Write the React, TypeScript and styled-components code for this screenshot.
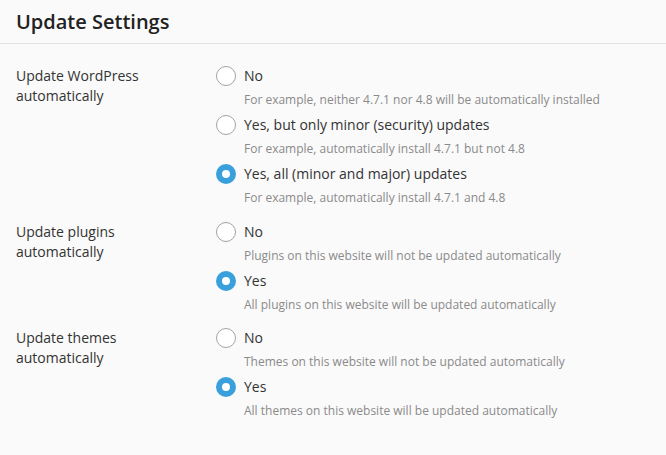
import React from "react";
import styled, { createGlobalStyle } from "styled-components";

const Global = createGlobalStyle`
  html, body {
    margin: 0;
    padding: 0;
    background: #fafafa;
  }
  body {
    font-family: "Open Sans", "Noto Sans", sans-serif;
    color: #333;
  }
`;

const Page = styled.div`
  width: 666px;
  min-height: 455px;
  background: #fafafa;
`;

const Header = styled.header`
  height: 44px;
  box-sizing: border-box;
  padding: 0 16px;
  display: flex;
  align-items: center;
  border-bottom: 1px solid #e4e4e4;
`;

const Title = styled.h1`
  margin: 0;
  font-size: 20px;
  font-weight: 600;
  color: #222;
  line-height: 28px;
  letter-spacing: 0;
`;

const Body = styled.div`
  padding: 22px 16px 0 16px;
  display: flex;
  flex-direction: column;
  gap: 14.5px;
`;

const Row = styled.div`
  display: grid;
  grid-template-columns: 200px 1fr;
`;

const RowLabel = styled.div`
  font-size: 14px;
  line-height: 20px;
  color: #333;
`;

const Options = styled.div`
  display: flex;
  flex-direction: column;
  gap: 6px;
`;

const Option = styled.label`
  display: flex;
  align-items: flex-start;
  gap: 8px;
`;

const Radio = styled.span<{ $checked: boolean }>`
  flex: none;
  width: 20px;
  height: 20px;
  box-sizing: border-box;
  border-radius: 50%;
  background: #fff;
  border: ${(p) => (p.$checked ? "6.5px solid #3aa0dc" : "1px solid #a3a3a3")};
`;

const OptionText = styled.div`
  display: flex;
  flex-direction: column;
  gap: 5px;
`;

const OptionLabel = styled.span`
  font-size: 14px;
  line-height: 20px;
  color: #333;
`;

const OptionDesc = styled.span`
  font-size: 12px;
  line-height: 18px;
  color: #8a8a8a;
`;

type Opt = { label: string; desc: string; checked?: boolean };
type Group = { title: string[]; options: Opt[] };

const groups: Group[] = [
  {
    title: ["Update WordPress", "automatically"],
    options: [
      { label: "No", desc: "For example, neither 4.7.1 nor 4.8 will be automatically installed" },
      { label: "Yes, but only minor (security) updates", desc: "For example, automatically install 4.7.1 but not 4.8" },
      { label: "Yes, all (minor and major) updates", desc: "For example, automatically install 4.7.1 and 4.8", checked: true },
    ],
  },
  {
    title: ["Update plugins", "automatically"],
    options: [
      { label: "No", desc: "Plugins on this website will not be updated automatically" },
      { label: "Yes", desc: "All plugins on this website will be updated automatically", checked: true },
    ],
  },
  {
    title: ["Update themes", "automatically"],
    options: [
      { label: "No", desc: "Themes on this website will not be updated automatically" },
      { label: "Yes", desc: "All themes on this website will be updated automatically", checked: true },
    ],
  },
];

export default function App() {
  return (
    <Page>
      <Global />
      <Header>
        <Title>Update Settings</Title>
      </Header>
      <Body>
        {groups.map((g, gi) => (
          <Row key={gi}>
            <RowLabel>
              {g.title[0]}
              <br />
              {g.title[1]}
            </RowLabel>
            <Options>
              {g.options.map((o, oi) => (
                <Option key={oi}>
                  <Radio $checked={!!o.checked} />
                  <OptionText>
                    <OptionLabel>{o.label}</OptionLabel>
                    <OptionDesc>{o.desc}</OptionDesc>
                  </OptionText>
                </Option>
              ))}
            </Options>
          </Row>
        ))}
      </Body>
    </Page>
  );
}
